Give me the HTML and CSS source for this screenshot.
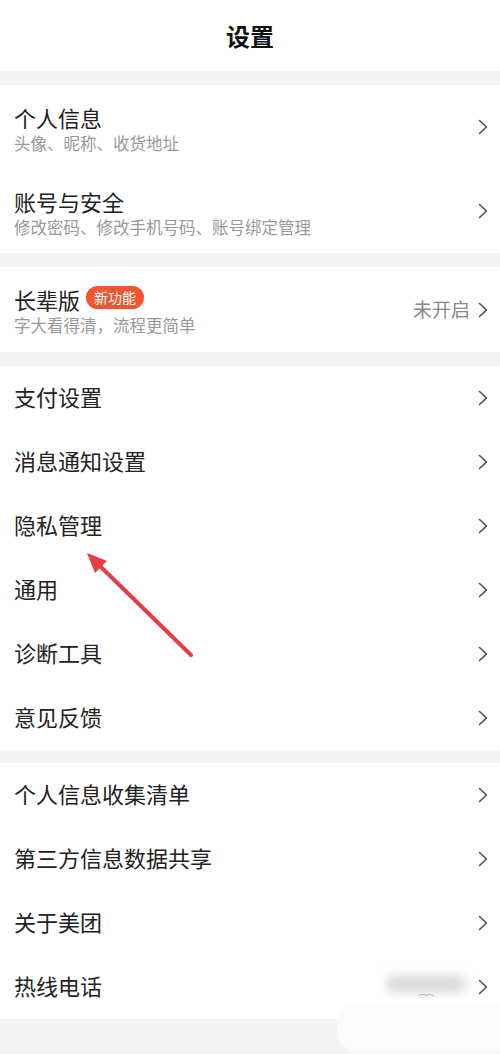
FILE: index.html
```html
<!DOCTYPE html>
<html lang="zh-CN">
<head>
<meta charset="utf-8">
<title>设置</title>
<link rel="stylesheet" href="styles.css">
</head>
<body>
<div class="page">
  <header class="header">设置</header>

  <section class="group">
    <div class="row two">
      <div class="text"><div class="title">个人信息</div><div class="sub">头像、昵称、收货地址</div></div>
      <svg class="chev" viewBox="0 0 10 16"><polyline points="1.5,1.5 8.5,8 1.5,14.5"/></svg>
    </div>
    <div class="row two">
      <div class="text"><div class="title">账号与安全</div><div class="sub">修改密码、修改手机号码、账号绑定管理</div></div>
      <svg class="chev" viewBox="0 0 10 16"><polyline points="1.5,1.5 8.5,8 1.5,14.5"/></svg>
    </div>
  </section>

  <section class="group">
    <div class="row two tall">
      <div class="text"><div class="title">长辈版<span class="badge">新功能</span></div><div class="sub">字大看得清，流程更简单</div></div>
      <div class="right"><span class="value">未开启</span><svg class="chev" viewBox="0 0 10 16"><polyline points="1.5,1.5 8.5,8 1.5,14.5"/></svg></div>
    </div>
  </section>

  <section class="group">
    <div class="row"><span class="title">支付设置</span><svg class="chev" viewBox="0 0 10 16"><polyline points="1.5,1.5 8.5,8 1.5,14.5"/></svg></div>
    <div class="row"><span class="title">消息通知设置</span><svg class="chev" viewBox="0 0 10 16"><polyline points="1.5,1.5 8.5,8 1.5,14.5"/></svg></div>
    <div class="row"><span class="title">隐私管理</span><svg class="chev" viewBox="0 0 10 16"><polyline points="1.5,1.5 8.5,8 1.5,14.5"/></svg></div>
    <div class="row"><span class="title">通用</span><svg class="chev" viewBox="0 0 10 16"><polyline points="1.5,1.5 8.5,8 1.5,14.5"/></svg></div>
    <div class="row"><span class="title">诊断工具</span><svg class="chev" viewBox="0 0 10 16"><polyline points="1.5,1.5 8.5,8 1.5,14.5"/></svg></div>
    <div class="row"><span class="title">意见反馈</span><svg class="chev" viewBox="0 0 10 16"><polyline points="1.5,1.5 8.5,8 1.5,14.5"/></svg></div>
  </section>

  <section class="group">
    <div class="row"><span class="title">个人信息收集清单</span><svg class="chev" viewBox="0 0 10 16"><polyline points="1.5,1.5 8.5,8 1.5,14.5"/></svg></div>
    <div class="row"><span class="title">第三方信息数据共享</span><svg class="chev" viewBox="0 0 10 16"><polyline points="1.5,1.5 8.5,8 1.5,14.5"/></svg></div>
    <div class="row"><span class="title">关于美团</span><svg class="chev" viewBox="0 0 10 16"><polyline points="1.5,1.5 8.5,8 1.5,14.5"/></svg></div>
    <div class="row"><span class="title">热线电话</span><svg class="chev" viewBox="0 0 10 16"><polyline points="1.5,1.5 8.5,8 1.5,14.5"/></svg></div>
  </section>

  <div class="blurred"></div>
  <div class="squiggle">⌒⌒</div>
  <div class="blob"></div>

  <svg class="arrow" viewBox="0 0 500 1054">
    <line x1="191" y1="655" x2="101" y2="567" class="arrow-line"/>
    <polygon points="87,553 107,561 95,573" class="arrow-head"/>
  </svg>
</div>
</body>
</html>
```

FILE: styles.css
```css
html, body {
  margin: 0;
  padding: 0;
}
body {
  background: #f4f4f4;
  font-family: "Noto Sans CJK SC", "Noto Sans", sans-serif;
  color: #222;
}
.page {
  position: relative;
  width: 500px;
  height: 1054px;
  overflow: hidden;
}
.header {
  height: 71px;
  background: #fff;
  display: flex;
  align-items: center;
  justify-content: center;
  font-size: 24px;
  font-weight: 700;
  color: #111;
  margin-bottom: 14px;
}
.group {
  background: #fff;
  margin-bottom: 14px;
}
.group:nth-of-type(3) {
  margin-bottom: 13px;
}
.row {
  height: 64px;
  display: flex;
  align-items: center;
  justify-content: space-between;
  padding: 0 12px 0 14px;
  box-sizing: border-box;
}
.row > .title {
  margin-bottom: 5px;
}
.row.two {
  height: 84px;
}
.row.two .text {
  margin-top: 4px;
}
.row.two.tall {
  height: 85px;
}
.row.two.tall .text {
  margin-top: 2px;
}
.title {
  font-size: 22px;
  line-height: 26px;
  color: #222;
  display: flex;
  align-items: center;
}
.sub {
  font-size: 16.5px;
  line-height: 22px;
  margin-top: 2px;
  color: #999;
}
.badge {
  display: inline-flex;
  align-items: center;
  justify-content: center;
  height: 23px;
  padding: 0 8px;
  margin-left: 6px;
  margin-top: -3px;
  border-radius: 12px;
  background: #ef5530;
  color: #fff;
  font-size: 14px;
  line-height: 23px;
}
.right {
  display: flex;
  align-items: center;
}
.value {
  font-size: 19px;
  color: #888;
  margin-right: 8px;
  margin-bottom: 3px;
}
.chev {
  width: 10px;
  height: 16px;
  flex: none;
}
.chev polyline {
  fill: none;
  stroke: #4a4a4a;
  stroke-width: 1.5;
  stroke-linecap: round;
  stroke-linejoin: round;
}
.arrow {
  position: absolute;
  left: 0;
  top: 0;
  width: 500px;
  height: 1054px;
  pointer-events: none;
}
.arrow-line {
  stroke: #e43d44;
  stroke-width: 4;
  stroke-linecap: round;
}
.arrow-head {
  fill: #e43d44;
}
.blurred {
  position: absolute;
  left: 386px;
  top: 975px;
  width: 80px;
  height: 18px;
  background: #dcdcdc;
  filter: blur(5px);
  border-radius: 8px;
}
.squiggle {
  position: absolute;
  left: 418px;
  top: 994px;
  font-size: 9px;
  line-height: 10px;
  color: #aaa;
  letter-spacing: -2px;
}
.blob {
  position: absolute;
  left: 337px;
  top: 1003px;
  width: 200px;
  height: 50px;
  background: #fbfbfb;
  border-radius: 22px;
}
```
